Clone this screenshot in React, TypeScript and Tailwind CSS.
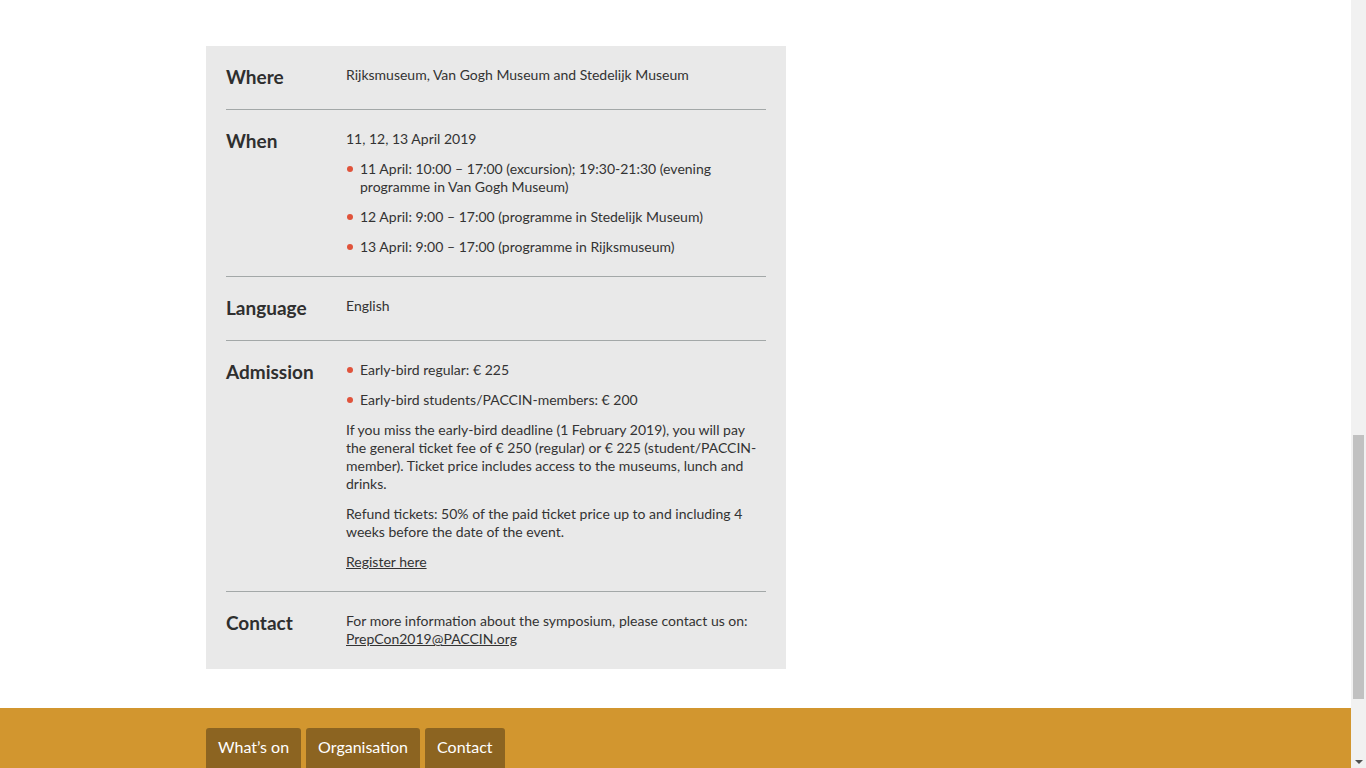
import React from "react";

const Bullet = ({ children }: { children: React.ReactNode }) => (
  <li className="relative pl-[14px] mb-3 last:mb-0">
    <span className="absolute left-[1px] top-[6px] w-[6px] h-[6px] rounded-full bg-[#e0533b]" />
    {children}
  </li>
);

const Row = ({ label, children, last, extra }: { label: string; children: React.ReactNode; last?: boolean; extra?: boolean }) => (
  <div className={`flex pt-5 ${extra || last ? "pb-[21px]" : "pb-5"} ${last ? "" : "border-b border-[#a3a8a8]"}`}>
    <div className="w-[120px] shrink-0 text-[19px] leading-[22px] font-bold text-[#2f2f2f]">{label}</div>
    <div className="flex-1 text-[14px] leading-[18px] text-[#333]">{children}</div>
  </div>
);

export default function App() {
  return (
    <div className="flex h-[768px] overflow-hidden bg-white" style={{ fontFamily: "Lato, 'Liberation Sans', sans-serif" }}>
      <div className="flex-1 flex flex-col">
        <div className="w-[939px] mx-auto pt-[46px]">
          <div className="w-[580px] bg-[#e9e9e9] px-5">
            <Row label="Where" extra>
              <p>Rijksmuseum, Van Gogh Museum and Stedelijk Museum</p>
            </Row>
            <Row label="When">
              <p className="mb-3">11, 12, 13 April 2019</p>
              <ul>
                <Bullet>11 April: 10:00 – 17:00 (excursion); 19:30-21:30 (evening programme in Van Gogh Museum)</Bullet>
                <Bullet>12 April: 9:00 – 17:00 (programme in Stedelijk Museum)</Bullet>
                <Bullet>13 April: 9:00 – 17:00 (programme in Rijksmuseum)</Bullet>
              </ul>
            </Row>
            <Row label="Language" extra>
              <p>English</p>
            </Row>
            <Row label="Admission">
              <ul className="mb-3">
                <Bullet>Early-bird regular: € 225</Bullet>
                <Bullet>Early-bird students/PACCIN-members: € 200</Bullet>
              </ul>
              <p className="mb-3">
                If you miss the early-bird deadline (1 February 2019), you will pay the general ticket fee of € 250 (regular) or € 225 (student/PACCIN-member). Ticket price includes access to the museums, lunch and drinks.
              </p>
              <p className="mb-3">Refund tickets: 50% of the paid ticket price up to and including 4 weeks before the date of the event.</p>
              <p>
                <a className="underline" href="#">Register here</a>
              </p>
            </Row>
            <Row label="Contact" last>
              <p>
                For more information about the symposium, please contact us on:{" "}
                <a className="underline" href="#">PrepCon2019@PACCIN.org</a>
              </p>
            </Row>
          </div>
        </div>
        <div className="mt-[39px] flex-1 bg-[#d2962f]">
          <div className="w-[939px] mx-auto pt-5 flex gap-[5px]">
            {["What’s on", "Organisation", "Contact"].map((t) => (
              <div key={t} className="bg-[#8c6421] text-white text-[16px] leading-[24px] px-3 pt-[7px] pb-3 rounded-t-[3px]">
                {t}
              </div>
            ))}
          </div>
        </div>
      </div>
      <div className="w-[15px] shrink-0 bg-[#f1f1f1] relative">
        <div className="absolute left-[2px] right-[2px] top-[435px] h-[264px] bg-[#c1c1c1]" />
        <div className="absolute left-[4px] bottom-[4px] w-0 h-0 border-l-[4px] border-r-[4px] border-t-[4px] border-l-transparent border-r-transparent border-t-[#505050]" />
      </div>
    </div>
  );
}
